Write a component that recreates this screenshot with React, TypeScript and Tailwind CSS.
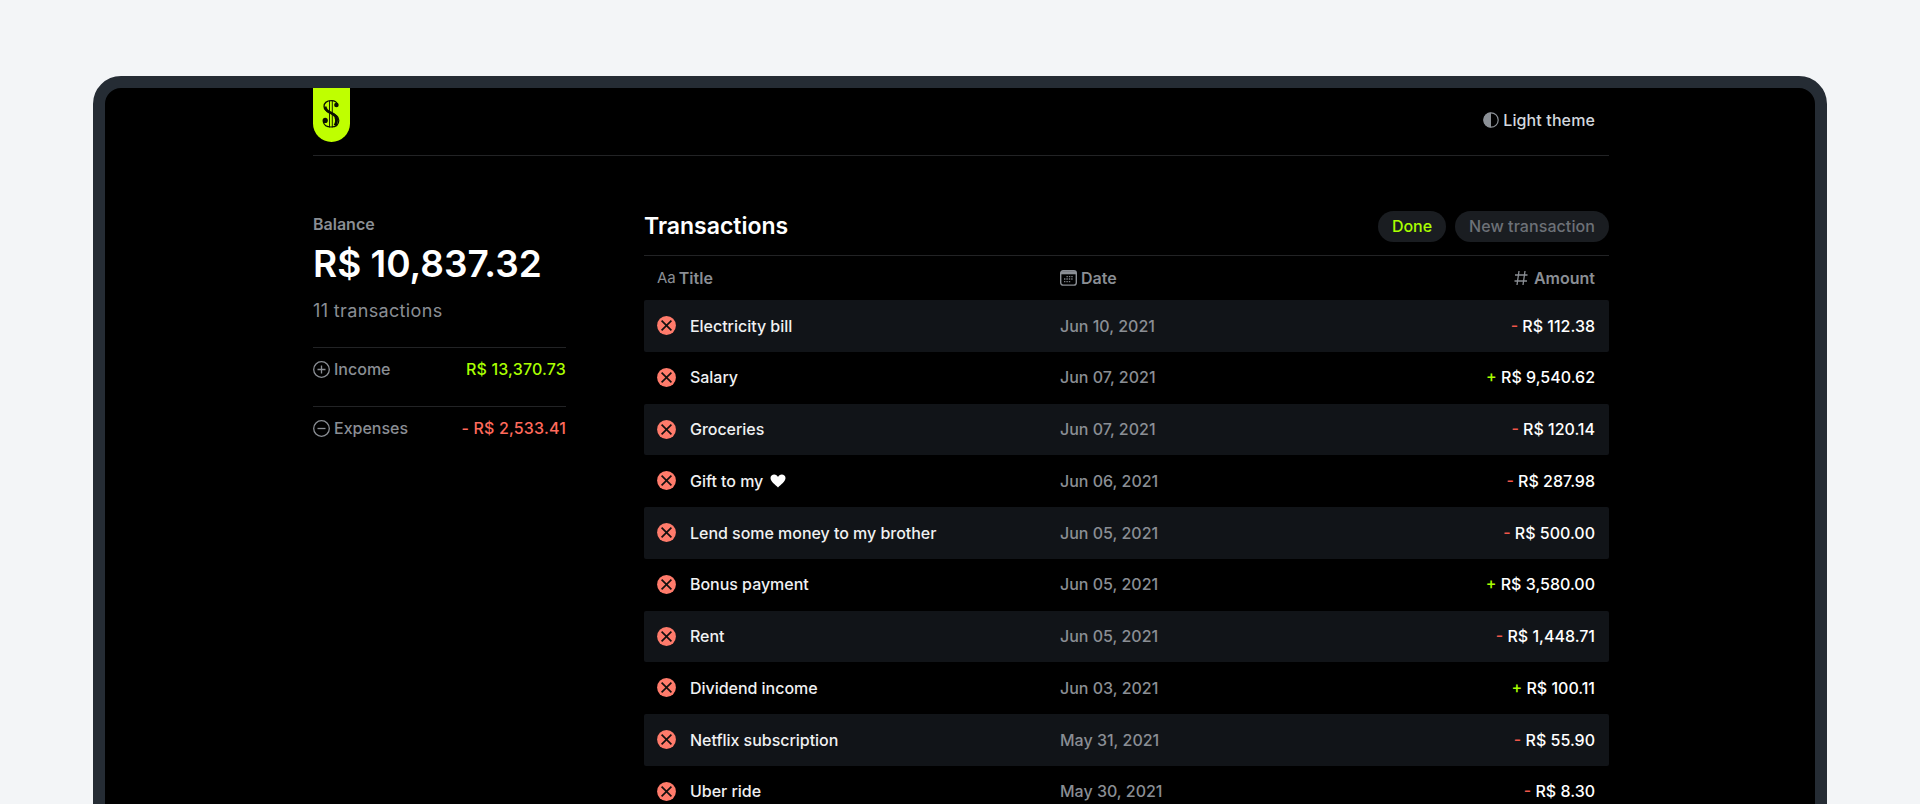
import React from "react";

type Transaction = { title: string; heart?: boolean; date: string; sign: "+" | "-"; amount: string };

const transactions: Transaction[] = [
  { title: "Electricity bill", date: "Jun 10, 2021", sign: "-", amount: "112.38" },
  { title: "Salary", date: "Jun 07, 2021", sign: "+", amount: "9,540.62" },
  { title: "Groceries", date: "Jun 07, 2021", sign: "-", amount: "120.14" },
  { title: "Gift to my", heart: true, date: "Jun 06, 2021", sign: "-", amount: "287.98" },
  { title: "Lend some money to my brother", date: "Jun 05, 2021", sign: "-", amount: "500.00" },
  { title: "Bonus payment", date: "Jun 05, 2021", sign: "+", amount: "3,580.00" },
  { title: "Rent", date: "Jun 05, 2021", sign: "-", amount: "1,448.71" },
  { title: "Dividend income", date: "Jun 03, 2021", sign: "+", amount: "100.11" },
  { title: "Netflix subscription", date: "May 31, 2021", sign: "-", amount: "55.90" },
  { title: "Uber ride", date: "May 30, 2021", sign: "-", amount: "8.30" },
];

function Logo() {
  return (
    <div className="flex h-[53.5px] w-[36.5px] justify-center rounded-b-full bg-[#bfff00] pt-[11px]">
      <svg width="18" height="30" viewBox="0 0 18 30" fill="none" stroke="#0b0f00">
        <path d="M7.500 1.500V28.500M10.300 1.500V28.500" strokeWidth="0.900" />
        <path
          d="M15.600 5.800C15 3 12.600 1.600 9.400 1.600C5 1.600 2 3.800 2 7.600C2 11 4.600 12.500 8.600 14C12.600 15.500 16.800 16.600 16.800 21.200C16.800 25.800 13.600 28 9 28C5 28 2 26.200 1.200 22.600"
          strokeWidth="1.200"
        />
        <path d="M3.300 7.400C3.300 11.600 6.400 12.800 9.600 14.200C12.400 15.500 14.800 17.400 14.800 21.400" strokeWidth="2.600" />
        <path d="M13.800 18C14.800 20 14.600 24 13 26.500" strokeWidth="3" />
        <circle cx="14.400" cy="6" r="2.300" fill="#0b0f00" stroke="none" />
        <circle cx="3.200" cy="21.400" r="2.600" fill="#0b0f00" stroke="none" />
      </svg>
    </div>
  );
}

function RemoveIcon() {
  return (
    <svg width="19" height="19" viewBox="0 0 19 19" className="shrink-0">
      <circle cx="9.500" cy="9.500" r="9.400" fill="#ff7b6b" />
      <path d="M4.600 4.600L14.400 14.400M14.400 4.600L4.600 14.400" stroke="#14100f" strokeWidth="1.700" />
    </svg>
  );
}

function CalendarIcon() {
  return (
    <svg width="17" height="16" viewBox="0 0 17 16" fill="none">
      <rect x="0.700" y="0.700" width="15.600" height="14.400" rx="2.400" stroke="#8b8f95" strokeWidth="1.400" />
      <path d="M1 1.200h15V4.300H1z" fill="#8b8f95" />
      <path d="M6.500 6.600h7M4 9h9.500M4 11.600h7" stroke="#7a7e83" strokeWidth="1.300" strokeDasharray="1.400 1" />
    </svg>
  );
}

export default function App() {
  return (
    <div className="h-[804px] overflow-hidden bg-[#f3f5f7] px-[93px] pt-[76px] font-['Inter',sans-serif] text-[16px]">
      <div className="h-[900px] rounded-t-[28px] border-[12px] border-[#252c34] bg-black">
        <div className="ml-[208px] w-[1296px]">
          <header className="flex h-[68px] items-start justify-between border-b border-[#222325]">
            <Logo />
            <div className="flex items-center gap-[4px] pt-[20px] pr-[14px] font-medium leading-6 tracking-[0.12px] text-[#d3d8de]">
              <svg width="16" height="16" viewBox="0 0 16 16">
                <circle cx="8" cy="8" r="7.200" fill="none" stroke="#8b9096" strokeWidth="1.200" />
                <path d="M8 0.500a7.500 7.500 0 0 0 0 15z" fill="#8b9096" />
              </svg>
              <span>Light theme</span>
            </div>
          </header>
          <div className="flex justify-between">
            <aside className="w-[253px] pt-[56px] text-[#8a8e94]">
              <div className="font-semibold leading-6">Balance</div>
              <div className="mt-[4px] text-[37px] font-semibold leading-[48px] text-white">R$ 10,837.32</div>
              <div className="mt-[11px] text-[18px] leading-6 tracking-[0.36px]">11 transactions</div>
              <div className="mt-[24px] flex h-[59px] items-start justify-between border-t border-[#222325] pt-[9px] leading-6">
                <div className="flex items-center gap-[4px]">
                  <svg width="17" height="17" viewBox="0 0 17 17" fill="none" stroke="#8a8e94" strokeWidth="1.300">
                    <circle cx="8.500" cy="8.500" r="7.800" />
                    <path d="M8.500 4.500v8M4.500 8.500h8" />
                  </svg>
                  <span className="font-medium">Income</span>
                </div>
                <span className="font-medium tracking-[0.17px] text-[#aaff00]">R$ 13,370.73</span>
              </div>
              <div className="flex items-start justify-between border-t border-[#222325] pt-[9px] leading-6">
                <div className="flex items-center gap-[4px]">
                  <svg width="17" height="17" viewBox="0 0 17 17" fill="none" stroke="#8a8e94" strokeWidth="1.300">
                    <circle cx="8.500" cy="8.500" r="7.800" />
                    <path d="M4.500 8.500h8" />
                  </svg>
                  <span className="font-medium">Expenses</span>
                </div>
                <span className="font-medium tracking-[0.17px] text-[#ff6a5c]">- R$ 2,533.41</span>
              </div>
            </aside>
            <main className="w-[965px] pt-[55px]">
              <div className="flex h-[45px] items-start justify-between border-b border-[#222325]">
                <h1 className="text-[23px] font-semibold leading-[30px] text-white">Transactions</h1>
                <div className="flex gap-[9px] font-medium">
                  <button className="h-[31px] w-[68px] rounded-full bg-[#1a1d21] pb-px text-[#aaff00]">Done</button>
                  <button className="h-[31px] w-[154px] rounded-full bg-[#1a1d21] pb-px tracking-[0.08px] text-[#6d7177]">
                    New transaction
                  </button>
                </div>
              </div>
              <div className="grid h-[44px] grid-cols-[403px_1fr_auto] items-center pr-[14px] pl-[13px] font-semibold text-[#8a8e94]">
                <div className="flex items-center gap-[3px]">
                  <span className="text-[15px] font-normal">Aa</span>
                  <span>Title</span>
                </div>
                <div className="flex items-center gap-[4px]">
                  <CalendarIcon />
                  <span>Date</span>
                </div>
                <div className="flex items-center gap-[6px]">
                  <svg width="14" height="16" viewBox="0 0 14 16" fill="none" stroke="#8a8e94" strokeWidth="1.300">
                    <path d="M5 1L3 15M11 1L9 15M1 5h12.500M0.500 11H13" />
                  </svg>
                  <span>Amount</span>
                </div>
              </div>
              {transactions.map((t, i) => (
                <div
                  key={i}
                  className="grid h-[51.75px] grid-cols-[403px_1fr_auto] items-center rounded-[2px] pr-[14px] pb-[0.5px] pl-[13px] font-medium nth-[2n+3]:bg-[#111418]"
                >
                  <div className="flex items-center gap-[14px] text-[#f0f1f2]">
                    <RemoveIcon />
                    <span className="flex items-center gap-[7px] tracking-[-0.03px]">
                      {t.title}
                      {t.heart && (
                        <svg width="16" height="14" viewBox="0 0 16 14" fill="white">
                          <path d="M8 13.500C5 10.500 0.500 7.500 0.500 4C0.500 1.800 2.200 0.500 4.200 0.500C6 0.500 7.300 1.500 8 3C8.700 1.500 10 0.500 11.800 0.500C13.800 0.500 15.500 1.800 15.500 4C15.500 7.500 11 10.500 8 13.500Z" />
                        </svg>
                      )}
                    </span>
                  </div>
                  <span className="text-[#8a8e94]">{t.date}</span>
                  <span className="text-white">
                    <span className={t.sign === "+" ? "text-[#aaff00]" : "text-[#f0574a]"}>{t.sign}</span> R$ {t.amount}
                  </span>
                </div>
              ))}
            </main>
          </div>
        </div>
      </div>
    </div>
  );
}
